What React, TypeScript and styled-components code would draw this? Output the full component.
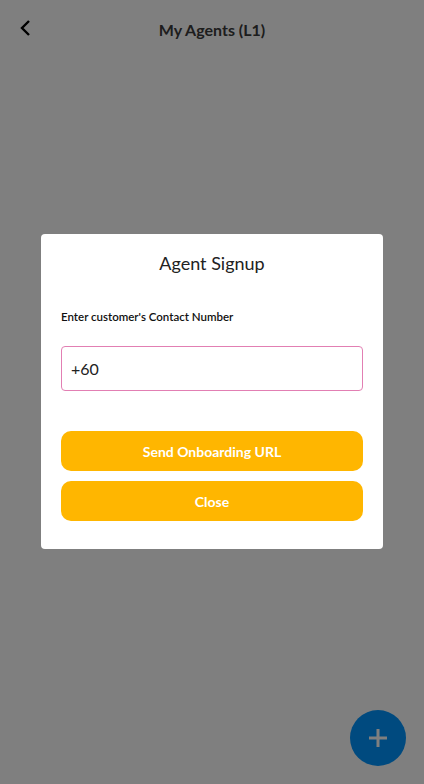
import React from "react";
import styled, { createGlobalStyle } from "styled-components";

const GlobalStyle = createGlobalStyle`
  html, body {
    margin: 0;
    padding: 0;
    background: #ffffff;
    font-family: Lato, "Noto Sans", sans-serif;
  }
  * { box-sizing: border-box; }
`;

const Page = styled.div`
  position: relative;
  width: 424px;
  height: 784px;
  background: #ffffff;
  overflow: hidden;
`;

const Header = styled.div`
  height: 58px;
  display: flex;
  align-items: center;
  justify-content: center;
  position: relative;
`;

const BackButton = styled.button`
  position: absolute;
  left: 14px;
  top: 16px;
  width: 22px;
  height: 24px;
  padding: 0;
  border: none;
  background: none;
  display: flex;
  align-items: center;
  justify-content: center;
`;

const HeaderTitle = styled.h1`
  margin: 0;
  font-size: 16px;
  font-weight: 700;
  color: #3a3a3a;
`;

const Fab = styled.button`
  position: absolute;
  right: 18px;
  bottom: 18px;
  width: 56px;
  height: 56px;
  border-radius: 50%;
  border: none;
  background: #0094ff;
  display: flex;
  align-items: center;
  justify-content: center;
  padding: 0;
`;

const Overlay = styled.div`
  position: absolute;
  inset: 0;
  background: rgba(0, 0, 0, 0.5);
  display: flex;
  align-items: center;
  justify-content: center;
  padding-bottom: 1px;
`;

const Modal = styled.div`
  width: 342px;
  background: #ffffff;
  border-radius: 4px;
  padding: 17px 20px 28px;
  display: flex;
  flex-direction: column;
`;

const ModalTitle = styled.h2`
  margin: 0;
  text-align: center;
  font-size: 18px;
  font-weight: 400;
  color: #222222;
  line-height: 24px;
`;

const Label = styled.label`
  margin-top: 34px;
  font-size: 11.5px;
  font-weight: 600;
  color: #111111;
  line-height: 16px;
`;

const PhoneInput = styled.input`
  margin-top: 21px;
  height: 45px;
  border: 1px solid #e27fb3;
  border-radius: 4px;
  padding: 0 9px;
  font-family: Lato, "Noto Sans", sans-serif;
  font-size: 16px;
  color: #222222;
  outline: none;
`;

const Actions = styled.div`
  margin-top: 40px;
  display: flex;
  flex-direction: column;
  gap: 10px;
`;

const ActionButton = styled.button`
  height: 40px;
  border: none;
  border-radius: 10px;
  background: #ffb600;
  color: #ffffff;
  font-family: Lato, "Noto Sans", sans-serif;
  font-size: 14px;
  font-weight: 700;
`;

export default function App() {
  return (
    <>
      <GlobalStyle />
      <Page>
        <Header>
          <BackButton aria-label="Back">
            <svg width="14" height="18" viewBox="0 0 14 18" fill="none">
              <path d="M11 2 L4 9 L11 16" stroke="#000" strokeWidth="2.4" />
            </svg>
          </BackButton>
          <HeaderTitle>My Agents (L1)</HeaderTitle>
        </Header>
        <Fab aria-label="Add">
          <svg width="24" height="24" viewBox="0 0 24 24">
            <path d="M12 3 V21 M3 12 H21" stroke="#fff" strokeWidth="3" />
          </svg>
        </Fab>
        <Overlay>
          <Modal>
            <ModalTitle>Agent Signup</ModalTitle>
            <Label>Enter customer's Contact Number</Label>
            <PhoneInput defaultValue="+60" />
            <Actions>
              <ActionButton>Send Onboarding URL</ActionButton>
              <ActionButton>Close</ActionButton>
            </Actions>
          </Modal>
        </Overlay>
      </Page>
    </>
  );
}
